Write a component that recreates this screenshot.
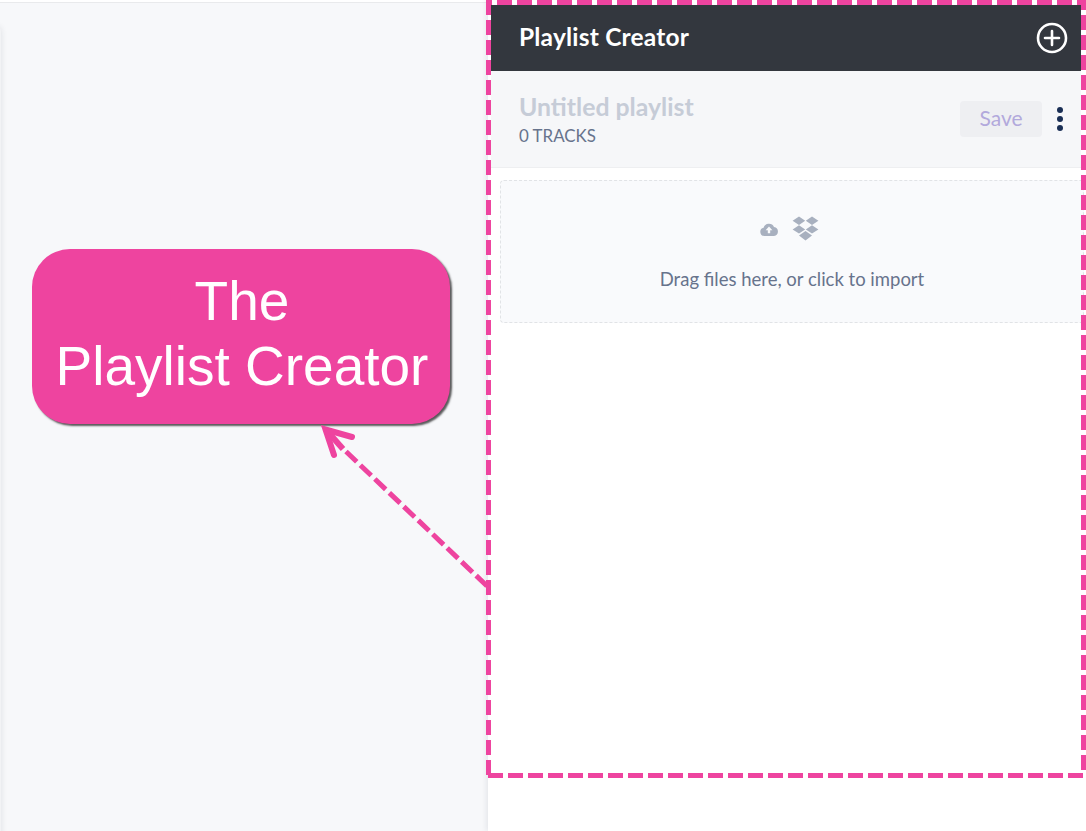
<div class="page">
  <main class="stage">
    <div class="card"></div>
  </main>
  <aside class="side">
    <header class="head">
      <h1>Playlist Creator</h1>
      <svg class="add" width="32" height="32" viewBox="0 0 32 32" aria-hidden="true">
        <circle cx="16" cy="16" r="14" fill="none" stroke="#fff" stroke-width="2.6" />
        <path d="M16 9v14M9 16h14" stroke="#fff" stroke-width="2.6" stroke-linecap="round" />
      </svg>
    </header>
    <section class="meta">
      <div class="titles">
        <h2>Untitled playlist</h2>
        <p>0 TRACKS</p>
      </div>
      <button class="save" type="button">Save</button>
      <svg class="more" width="8" height="26" viewBox="0 0 8 26" aria-hidden="true">
        <circle cx="4" cy="4" r="3" /><circle cx="4" cy="13" r="3" /><circle cx="4" cy="22" r="3" />
      </svg>
    </section>
    <section class="drop">
      <div class="icons">
        <svg width="18" height="14" viewBox="0 0 18 14" aria-hidden="true">
          <path fill-rule="evenodd" d="M4.4 14A4.2 4.2 0 0 1 3.6 5.7 5.6 5.6 0 0 1 14 4.9 4.6 4.6 0 0 1 14 14ZM9 4.6 5.6 8.2H7.8V11.2H10.2V8.2H12.4Z" />
        </svg>
        <svg width="27" height="25" viewBox="0 0 27 25" aria-hidden="true">
          <path d="M7 0.5 13.2 4.8 7 9 0.6 4.8ZM20 0.5 26.4 4.8 20 9 13.8 4.8ZM7 9.2 13.2 13.4 7 17.6 0.6 13.4ZM20 9.2 26.4 13.4 20 17.6 13.8 13.4ZM13.5 15 20 19.4 13.5 24.5 7 19.4Z" />
        </svg>
      </div>
      <p>Drag files here, or click to import</p>
    </section>
  </aside>

  <div class="callout">The<br />Playlist Creator</div>

  <svg class="marks" width="1086" height="831" viewBox="0 0 1086 831" aria-hidden="true">
    <g fill="none" stroke="#ee449f" stroke-width="5">
      <path d="M487 2.5H1086" stroke-dasharray="15 5" stroke-dashoffset="10" />
      <path d="M488.5 0V778" stroke-dasharray="15 5" />
      <path d="M1083.5 0V773" stroke-dasharray="15 5" stroke-dashoffset="5" />
      <path d="M488 775.5H1084" stroke-dasharray="15 5" />
      <path d="M487 586 346 451.5" stroke-dasharray="15 5" />
      <path d="M343 449 328 432" stroke-width="6" />
      <path d="M352 437 325.5 429.5 334 455" stroke-width="6" stroke-linecap="round" stroke-linejoin="miter" />
    </g>
  </svg>
</div>

<style>
  :global(body) {
    margin: 0;
    background: #fff;
  }

  .page {
    position: relative;
    display: flex;
    width: 1086px;
    height: 831px;
    overflow: hidden;
    font-family: Lato, "Open Sans", sans-serif;
  }

  .stage {
    width: 488px;
    flex: none;
    margin-top: 2px;
    border-top: 1px solid #e9eaec;
    background: #f7f8fa;
    box-sizing: border-box;
    overflow: hidden;
  }

  .card {
    width: 10px;
    height: 900px;
    margin: 24px 0 0 -9px;
    border-radius: 4px;
    background: #f2f3f5;
    box-shadow: 0 0 6px rgba(30, 40, 60, 0.12);
  }

  .side {
    flex: 1;
    min-width: 0;
    padding: 5px 5px 0 3px;
    background: #fff;
    box-shadow: -2px 0 5px rgba(30, 40, 60, 0.08);
    z-index: 1;
  }

  .head {
    display: flex;
    align-items: center;
    justify-content: space-between;
    height: 66px;
    padding: 0 13px 0 28px;
    background: #33373e;
    color: #fff;
  }

  h1 {
    margin: 0 0 2px;
    font-size: 24.5px;
    line-height: 30px;
    font-weight: 700;
    letter-spacing: 0.2px;
  }

  .add {
    display: block;
  }

  .meta {
    display: flex;
    align-items: center;
    height: 96px;
    padding: 0 17px 0 28px;
    border-bottom: 1px solid #eeeff1;
    background: #f6f7f9;
  }

  .titles {
    flex: 1;
  }

  h2 {
    margin: -1px 0 0;
    font-size: 24.8px;
    line-height: 30px;
    font-weight: 700;
    color: #c6ccd7;
  }

  .titles p {
    margin: 4px 0 0;
    font-size: 16.9px;
    line-height: 20px;
    color: #67738c;
  }

  .save {
    width: 82px;
    height: 36px;
    padding: 0 0 3px;
    border: 0;
    border-radius: 4px;
    background: #eeeff2;
    color: #b2a9dc;
    font: 400 21px Lato, sans-serif;
  }

  .more {
    display: block;
    margin-left: 14px;
    fill: #1a2f55;
  }

  .drop {
    height: 143px;
    margin: 12px -3px 0 9px;
    box-sizing: border-box;
    border: 1px dashed #e1e3e6;
    border-radius: 4px;
    background: #f9fafc;
    text-align: center;
    color: #67738c;
  }

  .icons {
    display: flex;
    align-items: center;
    justify-content: center;
    gap: 14px;
    height: 25px;
    margin: 35px 6px 0 0;
    fill: #a8b0bf;
  }

  .icons svg {
    display: block;
  }

  .drop p {
    margin: 26px 0 0;
    font-size: 18.5px;
    line-height: 24px;
  }

  .callout {
    position: absolute;
    left: 32px;
    top: 249px;
    width: 418px;
    height: 175px;
    box-sizing: border-box;
    padding: 20px 0 0 2px;
    border-radius: 38px;
    background: #ee449f;
    box-shadow: 2px 2px 2px rgba(50, 50, 50, 0.8);
    color: #fff;
    font-family: "Liberation Sans", Arial, sans-serif;
    font-size: 55px;
    line-height: 65px;
    text-align: center;
  }

  .marks {
    position: absolute;
    inset: 0;
    z-index: 2;
    pointer-events: none;
  }
</style>
